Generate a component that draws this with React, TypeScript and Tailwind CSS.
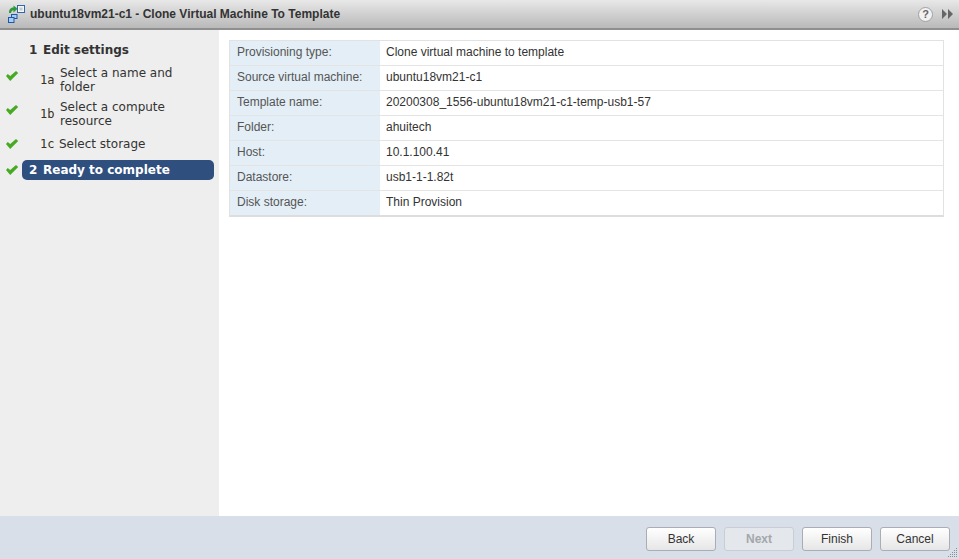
import React from 'react';

const rows = [
    ['Provisioning type:', 'Clone virtual machine to template'],
    ['Source virtual machine:', 'ubuntu18vm21-c1'],
    ['Template name:', '20200308_1556-ubuntu18vm21-c1-temp-usb1-57'],
    ['Folder:', 'ahuitech'],
    ['Host:', '10.1.100.41'],
    ['Datastore:', 'usb1-1-1.82t'],
    ['Disk storage:', 'Thin Provision'],
];

const Check = ({ className = '' }: { className?: string }) => (
    <svg width="14" height="10" viewBox="0 0 14 10" className={`shrink-0 ${className}`}>
        <path d="M1 5 L2.8 3 L5.2 5 L11 0 L13.2 2 L5.2 10 Z" fill="#46ab22" />
    </svg>
);

const SubStep = ({ id, label, idWidth, checkClass }: { id: string; label: string[]; idWidth: string; checkClass: string }) => (
    <div className="flex items-start pl-[5px]">
        <Check className={checkClass} />
        <span className={`ml-[21px] self-center font-['DejaVu_Sans_Mono',monospace] text-[12px] leading-[14px] text-[#3a3020] ${idWidth}`}>{id}</span>
        <div className="text-[12px] leading-[14px] text-[#333]">
            {label.map(line => <div key={line}>{line}</div>)}
        </div>
    </div>
);

const Button = ({ label, disabled }: { label: string; disabled?: boolean }) => (
    <button
        className={`h-[24px] w-[70px] rounded-[3px] border text-[12px] ${disabled
            ? 'border-[#c9ced4] bg-[#e4e7eb] font-bold text-[#a3a7ac]'
            : 'border-[#a9aeb4] bg-gradient-to-b from-[#ffffff] to-[#e6e6e6] text-[#333]'}`}
    >
        {label}
    </button>
);

export default function App() {
    return (
        <div className="flex h-[559px] w-[959px] flex-col overflow-hidden bg-white font-['Liberation_Sans',sans-serif]">
            {/* Title bar */}
            <div className="flex h-[30px] shrink-0 items-center border-b-2 border-[#8f8f8f] bg-gradient-to-b from-[#e8e8e8] to-[#b9b9b9] pl-[8px] pr-[6px]">
                <svg width="17" height="18" viewBox="0 0 17 18" className="shrink-0">
                    <path d="M1 8 C1 4 3 2.6 5.5 2.6 L5.5 0.4 L9.6 3.8 L5.5 7.4 L5.5 5.2 C4.2 5.2 3.4 6 3 8 Z" fill="#2f9a3a" />
                    <rect x="9.5" y="0.5" width="7" height="7" fill="#f4f4f4" stroke="#3566a5" />
                    <rect x="11.5" y="2.5" width="3" height="3" fill="#b9cbe0" />
                    <rect x="3.5" y="9.5" width="5.5" height="4" fill="#a9ccf2" stroke="#1f58ab" />
                    <rect x="0.5" y="12.5" width="5.5" height="5" fill="#a9ccf2" stroke="#1f58ab" />
                </svg>
                <span className="ml-[5px] text-[12px] font-bold text-[#333]">ubuntu18vm21-c1 - Clone Virtual Machine To Template</span>
                <div className="ml-auto flex items-center gap-[9px]">
                    <div className="flex h-[15px] w-[15px] items-center justify-center rounded-full border border-[#a0a0a0] bg-[#f2f2f2] text-[11px] font-bold text-[#666]">?</div>
                    <svg width="11" height="10" viewBox="0 0 11 10">
                        <path d="M0 0 L5 5 L0 10 Z M6 0 L11 5 L6 10 Z" fill="#666" />
                    </svg>
                </div>
            </div>

            {/* Body */}
            <div className="flex min-h-0 flex-1">
                <div className="w-[219px] shrink-0 bg-[#eeeeee] pt-[12px] font-['DejaVu_Sans',sans-serif]">
                    <div className="flex items-center pl-[29px] text-[12px] font-bold leading-[16px] text-[#333]">
                        <span className="w-[14px]">1</span>
                        <span>Edit settings</span>
                    </div>
                    <div className="mt-[8px]">
                        <SubStep id="1a" label={['Select a name and', 'folder']} idWidth="w-[20px]" checkClass="mt-[5px]" />
                    </div>
                    <div className="mt-[6px]">
                        <SubStep id="1b" label={['Select a compute', 'resource']} idWidth="w-[20px]" checkClass="mt-[5px]" />
                    </div>
                    <div className="mt-[9px]">
                        <SubStep id="1c" label={['Select storage']} idWidth="w-[19px]" checkClass="mt-[2px]" />
                    </div>
                    <div className="mt-[9px] flex items-center pl-[5px]">
                        <Check />
                        <div className="ml-[3px] flex h-[20px] w-[192px] items-center rounded-[5px] bg-[#2f4f7f] pl-[7px] text-[12px] font-bold text-white">
                            <span className="w-[14px]">2</span>
                            <span>Ready to complete</span>
                        </div>
                    </div>
                </div>

                <div className="min-w-0 flex-1 px-[10px] pt-[10px]">
                    <div className="w-[715px] border border-b-2 border-[#e2e2e2] border-b-[#dddddd]">
                        {rows.map(([label, value], i) => (
                            <div key={label} className={`flex ${i > 0 ? 'h-[25px] border-t border-[#e4e4e4]' : 'h-[24px]'}`}>
                                <div className="flex w-[150px] shrink-0 items-center bg-[#e3eef6] pb-[2px] pl-[7px] text-[12px] leading-[14px] text-[#555]">{label}</div>
                                <div className="flex flex-1 items-center pb-[2px] pl-[6px] text-[12px] leading-[14px] text-[#333]">{value}</div>
                            </div>
                        ))}
                    </div>
                </div>
            </div>

            {/* Footer */}
            <div className="relative flex h-[43px] shrink-0 items-start justify-end gap-[8px] bg-[#d9dfe8] pr-[9px] pt-[11px]">
                <Button label="Back" />
                <Button label="Next" disabled />
                <Button label="Finish" />
                <Button label="Cancel" />
                <svg width="12" height="12" viewBox="0 0 12 12" className="absolute bottom-0 right-0">
                    <path d="M9 1h1v1H9zM7 3h1v1H7zM9 3h1v1H9zM5 5h1v1H5zM7 5h1v1H7zM9 5h1v1H9zM3 7h1v1H3zM5 7h1v1H5zM7 7h1v1H7zM9 7h1v1H9zM1 9h1v1H1zM3 9h1v1H3zM5 9h1v1H5zM7 9h1v1H7zM9 9h1v1H9z" fill="#8a8f96" />
                </svg>
            </div>
        </div>
    );
}
